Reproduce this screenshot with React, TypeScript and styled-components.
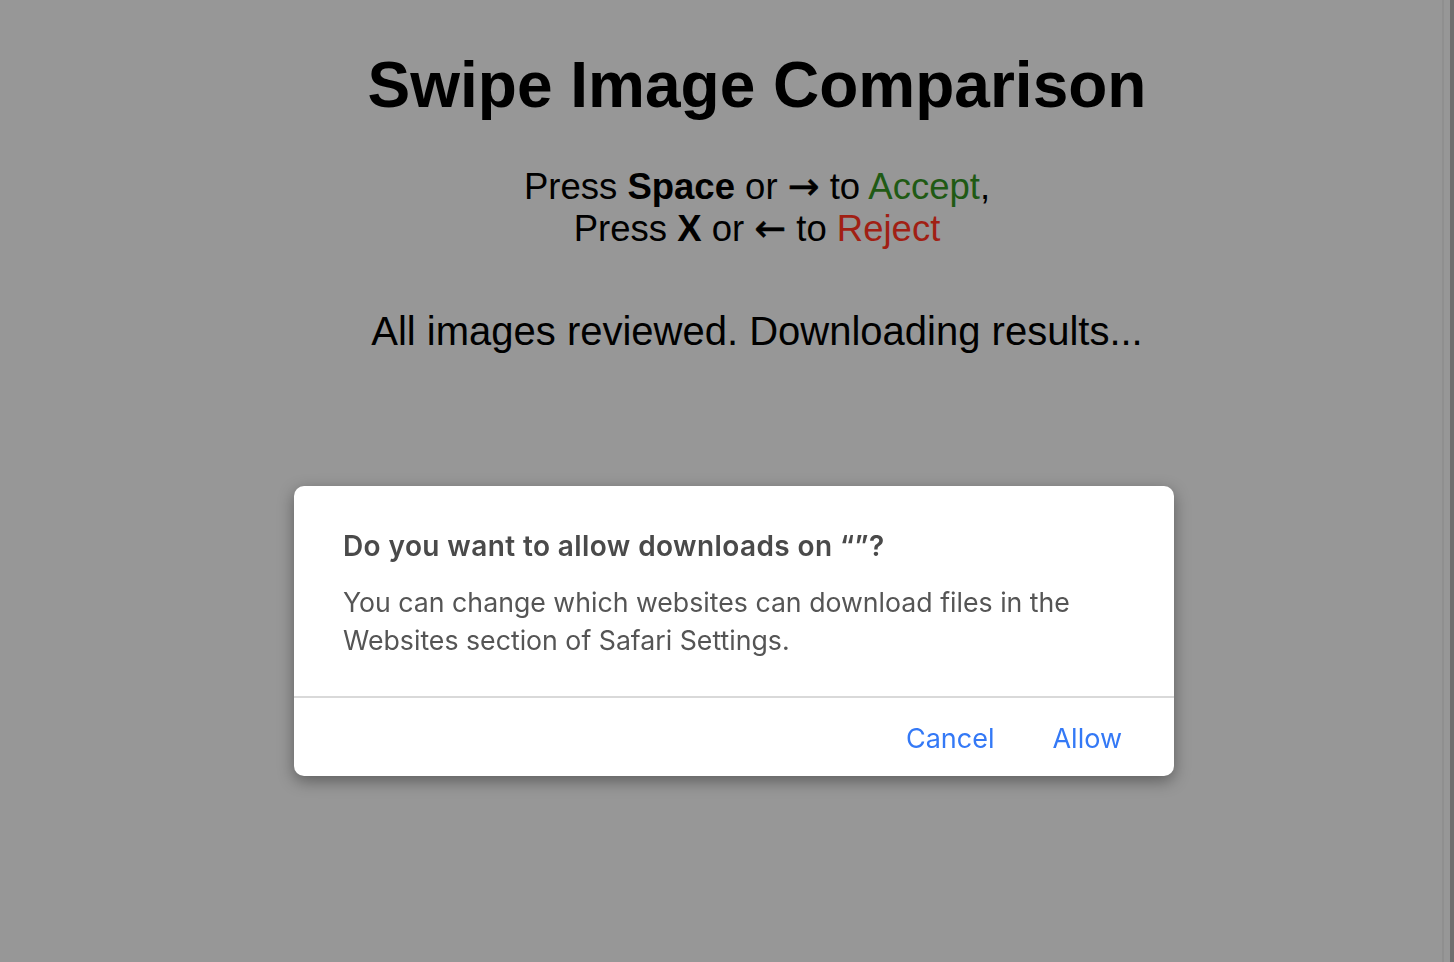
import React from "react";
import styled, { createGlobalStyle } from "styled-components";

const GlobalStyle = createGlobalStyle`
  html, body {
    margin: 0;
    padding: 0;
    height: 100%;
    background: #979797;
    overflow: hidden;
  }
  #root {
    height: 100%;
  }
`;

const Screen = styled.div`
  display: flex;
  height: 100vh;
  background: #979797;
`;

const Page = styled.main`
  flex: 1;
  display: flex;
  flex-direction: column;
  align-items: center;
  padding-left: 72px;
  font-family: "Liberation Sans", Arial, sans-serif;
  color: #000;
`;

const Title = styled.h1`
  margin: 48px 0 0;
  font-size: 64px;
  line-height: 74px;
  font-weight: 700;
`;

const Instructions = styled.p`
  margin: 44px 0 0;
  font-size: 36.5px;
  line-height: 42px;
  text-align: center;
`;

const Line = styled.span`
  display: block;
  height: 42px;
`;

const Word = styled.span<{ $tone?: "accept" | "reject" }>`
  color: ${(p) => (p.$tone === "accept" ? "#1f5a14" : p.$tone === "reject" ? "#a11f14" : "inherit")};
`;

const Arrow = styled.span`
  display: inline-block;
  font-family: "DejaVu Sans", sans-serif;
  font-size: 38px;
  line-height: 30px;
  font-weight: 400;
  -webkit-text-stroke: 0.5px #000;
`;

const Status = styled.p`
  margin: 58px 0 0;
  font-size: 40px;
  line-height: 46px;
`;

const ScrollTrack = styled.div`
  width: 12px;
  display: flex;
  border-left: 2px solid #8f8f8f;
  box-sizing: border-box;
`;

const ScrollGutter = styled.div`
  width: 6px;
  background: #979797;
`;

const ScrollEdge = styled.div`
  flex: 1;
  background: #6f6f6f;
`;

const Overlay = styled.div`
  position: fixed;
  left: 0;
  top: 0;
  padding: 486px 0 0 294px;
  font-family: Inter, "Noto Sans", sans-serif;
`;

const Dialog = styled.div`
  width: 880px;
  height: 290px;
  box-sizing: border-box;
  background: #fff;
  border-radius: 10px;
  box-shadow: 0 5px 16px rgba(0, 0, 0, 0.38);
  display: flex;
  flex-direction: column;
`;

const DialogBody = styled.div`
  padding: 40px 49px 0;
  height: 210px;
  box-sizing: border-box;
`;

const DialogTitle = styled.h2`
  margin: 0;
  font-size: 28px;
  line-height: 40px;
  font-weight: 600;
  letter-spacing: 0.4px;
  color: #4a4a4a;
`;

const DialogText = styled.p`
  margin: 17px 0 0;
  font-size: 26.7px;
  line-height: 38px;
  font-weight: 400;
  color: #555;
`;

const Divider = styled.hr`
  margin: 0;
  border: 0;
  height: 2px;
  background: #d9d9d9;
`;

const Actions = styled.div`
  flex: 1;
  display: flex;
  justify-content: flex-end;
  align-items: center;
  gap: 58px;
  padding: 3px 52px 0;
`;

const ActionButton = styled.button`
  border: 0;
  background: none;
  padding: 0;
  font-family: inherit;
  font-size: 27px;
  color: #3479f6;
  cursor: pointer;
`;

export default function App() {
  return (
    <>
      <GlobalStyle />
      <Screen>
        <Page>
          <Title>Swipe Image Comparison</Title>
          <Instructions>
            <Line>
              Press <b>Space</b> or <Arrow>→</Arrow> to <Word $tone="accept">Accept</Word>,
            </Line>
            <Line>
              Press <b>X</b> or <Arrow>←</Arrow> to <Word $tone="reject">Reject</Word>
            </Line>
          </Instructions>
          <Status>All images reviewed. Downloading results...</Status>
        </Page>
        <ScrollTrack>
          <ScrollGutter />
          <ScrollEdge />
        </ScrollTrack>
      </Screen>
      <Overlay>
        <Dialog role="dialog">
          <DialogBody>
            <DialogTitle>Do you want to allow downloads on “”?</DialogTitle>
            <DialogText>
              You can change which websites can download files in the
              <br />
              Websites section of Safari Settings.
            </DialogText>
          </DialogBody>
          <Divider />
          <Actions>
            <ActionButton>Cancel</ActionButton>
            <ActionButton>Allow</ActionButton>
          </Actions>
        </Dialog>
      </Overlay>
    </>
  );
}
